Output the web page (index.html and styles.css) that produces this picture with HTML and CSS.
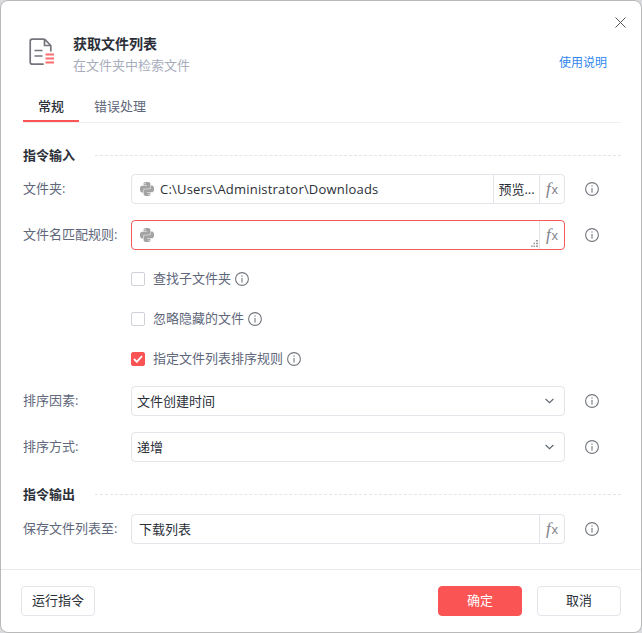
FILE: index.html
```html
<!DOCTYPE html>
<html lang="zh-CN">
<head>
  <meta charset="UTF-8" />
  <title>获取文件列表</title>
  <link rel="stylesheet" href="styles.css">
</head>
<body>
  <svg class="defs" width="0" height="0">
    <symbol id="py" viewBox="0 0 24 24">
      <path fill="#a3a3a3" d="M14.25.18l.9.2.73.26.59.3.45.32.34.34.25.34.16.33.1.3.04.26.02.2-.01.13V8.5l-.05.63-.13.55-.21.46-.26.38-.3.31-.33.25-.35.19-.35.14-.33.1-.3.07-.26.04-.21.02H8.77l-.69.05-.59.14-.5.22-.41.27-.33.32-.27.35-.2.36-.15.37-.1.35-.07.32-.04.27-.02.21v3.06H3.17l-.21-.03-.28-.07-.32-.12-.35-.18-.36-.26-.36-.36-.35-.46-.32-.59-.28-.73-.21-.88-.14-1.05-.05-1.23.06-1.22.16-1.04.24-.87.32-.71.36-.57.4-.44.42-.33.42-.24.4-.16.36-.1.32-.05.24-.01h.16l.06.01h8.16v-.83H6.18l-.01-2.75-.02-.37.05-.34.11-.31.17-.28.25-.26.31-.23.38-.2.44-.18.51-.15.58-.12.64-.1.71-.06.77-.04.84-.02 1.27.05zm-6.3 1.98l-.23.33-.08.41.08.41.23.34.33.22.41.09.41-.09.33-.22.23-.34.08-.41-.08-.41-.23-.33-.33-.22-.41-.09-.41.09zm13.09 3.95l.28.06.32.12.35.18.36.27.36.35.35.47.32.59.28.73.21.88.14 1.04.05 1.23-.06 1.23-.16 1.04-.24.86-.32.71-.36.57-.4.45-.42.33-.42.24-.4.16-.36.09-.32.05-.24.02-.16-.01h-8.22v.82h5.84l.01 2.76.02.36-.05.34-.11.31-.17.29-.25.25-.31.24-.38.2-.44.17-.51.15-.58.13-.64.09-.71.07-.77.04-.84.01-1.27-.04-1.07-.14-.9-.2-.73-.25-.59-.3-.45-.33-.34-.34-.25-.34-.16-.33-.1-.3-.04-.25-.02-.2.01-.13v-5.34l.05-.64.13-.54.21-.46.26-.38.3-.32.33-.24.35-.2.35-.14.33-.1.3-.06.26-.04.21-.02.13-.01h5.84l.69-.05.59-.14.5-.21.41-.28.33-.32.27-.35.2-.36.15-.36.1-.35.07-.32.04-.28.02-.21V6.07h2.09l.14.01zm-6.47 14.25l-.23.33-.08.41.08.41.23.33.33.23.41.08.41-.08.33-.23.23-.33.08-.41-.08-.41-.23-.33-.33-.23-.41-.08-.41.08z"/>
    </symbol>
    <symbol id="info" viewBox="0 0 14 14">
      <circle cx="7" cy="7" r="6.400" fill="none" stroke="#74777f" stroke-width="1.100"/>
      <rect x="6.450" y="6" width="1.100" height="4.600" fill="#74777f"/>
      <rect x="6.450" y="3.400" width="1.100" height="1.300" fill="#74777f"/>
    </symbol>
    <symbol id="chev" viewBox="0 0 9 6">
      <path d="M.6 1l3.900 3.700L8.400 1" fill="none" stroke="#5f6470" stroke-width="1.100"/>
    </symbol>
  </svg>

  <div class="dialog">
    <button class="close" aria-label="关闭">
      <svg width="11" height="11" viewBox="0 0 11 11"><path d="M.5.5l10 10M10.5.5l-10 10" stroke="#555" stroke-width="1"/></svg>
    </button>

    <div class="head">
      <svg class="head-icon" width="26" height="27" viewBox="0 0 26 27">
        <path d="M15.500 1.200H3.200A2 2 0 0 0 1.200 3.200v21a2 2 0 0 0 2 2h11.500M15.500 1.200l6.300 6.300v6M15.500 1.200v6.300h6.300" fill="none" stroke="#74747c" stroke-width="1.700"/>
        <path d="M5.500 12.500h8M5.500 18h8" stroke="#74747c" stroke-width="1.700"/>
        <path d="M16.500 16.500h8.500M16.500 20.500h8.500M16.500 24.500h8.500" stroke="#fb6d6d" stroke-width="1.800"/>
      </svg>
      <div class="head-text">
        <div class="title">获取文件列表</div>
        <div class="subtitle">在文件夹中检索文件</div>
      </div>
      <a class="help">使用说明</a>
    </div>

    <div class="tabs">
      <div class="tab active">常规</div>
      <div class="tab">错误处理</div>
    </div>

    <div class="section-title"><span>指令输入</span></div>

    <div class="row row-first">
      <label class="label">文件夹:</label>
      <div class="field">
        <svg class="py" width="14" height="14"><use href="#py"/></svg>
        <span class="value path">C:\Users\Administrator\Downloads</span>
        <span class="addon preview">预览...</span>
        <span class="addon fx"><i>f</i>x</span>
      </div>
      <svg class="info" width="14" height="14"><use href="#info"/></svg>
    </div>

    <div class="row">
      <label class="label">文件名匹配规则:</label>
      <div class="field error">
        <svg class="py" width="14" height="14"><use href="#py"/></svg>
        <span class="value"></span>
        <svg class="grip" width="7" height="7" viewBox="0 0 7 7"><path d="M5 0h2v1.500H5zM2.500 2.700h1.500v1.500H2.500zM5 2.700h2v1.500H5zM0 5.400h1.500V7H0zM2.500 5.400h1.500V7H2.500zM5 5.400h2V7H5z" fill="#9a9a9a"/></svg>
        <span class="addon fx"><i>f</i>x</span>
      </div>
      <svg class="info" width="14" height="14"><use href="#info"/></svg>
    </div>

    <div class="check-row first-check">
      <span class="box"></span>
      <span class="check-text">查找子文件夹</span>
      <svg width="14" height="14"><use href="#info"/></svg>
    </div>
    <div class="check-row">
      <span class="box"></span>
      <span class="check-text">忽略隐藏的文件</span>
      <svg width="14" height="14"><use href="#info"/></svg>
    </div>
    <div class="check-row">
      <span class="box checked">
        <svg width="10" height="8" viewBox="0 0 10 8"><path d="M1 4l2.800 2.800L9 1.200" fill="none" stroke="#fff" stroke-width="1.800"/></svg>
      </span>
      <span class="check-text">指定文件列表排序规则</span>
      <svg width="14" height="14"><use href="#info"/></svg>
    </div>

    <div class="row sort-first">
      <label class="label">排序因素:</label>
      <div class="field select">
        <span class="value">文件创建时间</span>
        <svg width="9" height="6"><use href="#chev"/></svg>
      </div>
      <svg class="info" width="14" height="14"><use href="#info"/></svg>
    </div>

    <div class="row">
      <label class="label">排序方式:</label>
      <div class="field select">
        <span class="value">递增</span>
        <svg width="9" height="6"><use href="#chev"/></svg>
      </div>
      <svg class="info" width="14" height="14"><use href="#info"/></svg>
    </div>

    <div class="section-title"><span>指令输出</span></div>

    <div class="row row-out">
      <label class="label">保存文件列表至:</label>
      <div class="field">
        <span class="value save">下载列表</span>
        <span class="addon fx"><i>f</i>x</span>
      </div>
      <svg class="info" width="14" height="14"><use href="#info"/></svg>
    </div>

    <div class="foot">
      <button class="btn">运行指令</button>
      <div class="foot-right">
        <button class="btn btn-red">确定</button>
        <button class="btn">取消</button>
      </div>
    </div>
  </div>
</body>
</html>
```

FILE: styles.css
```css
* {
  box-sizing: border-box;
}

html, body {
  margin: 0;
  height: 100%;
}

body {
  background: #d9dadd;
  font-family: "Open Sans", "Noto Sans CJK SC", sans-serif;
  font-size: 13px;
  color: #2b2f38;
  overflow: hidden;
}

.defs {
  display: block;
  height: 0;
}

.dialog {
  position: relative;
  width: 642px;
  height: 633px;
  background: #fff;
  border: 1px solid #b9b9b9;
  border-radius: 8px;
  padding: 0 20px 0 22px;
}

.close {
  position: absolute;
  top: 16px;
  right: 15px;
  padding: 0;
  border: 0;
  background: none;
  line-height: 0;
}

/* header */
.head {
  display: flex;
  padding: 33px 0 0 6px;
  height: 82px;
}

.head-icon {
  margin-top: 4px;
}

.head-text {
  margin-left: 18px;
  flex: 1;
}

.title {
  font-size: 14px;
  font-weight: 700;
  line-height: 20px;
  color: #2b2f38;
}

.subtitle {
  margin-top: 1px;
  line-height: 20px;
  color: #a8adbd;
}

.help {
  align-self: flex-start;
  margin: 19px 14px 0 0;
  font-size: 12px;
  line-height: 20px;
  color: #2f86ee;
}

/* tabs */
.tabs {
  display: flex;
  height: 40px;
  border-bottom: 1px solid #eeeff2;
}

.tab {
  width: 56px;
  height: 39px;
  margin-right: 13px;
  padding-top: 13px;
  text-align: center;
  line-height: 20px;
  color: #60677a;
  white-space: nowrap;
}

.tab.active {
  color: #2b2f38;
  font-weight: 500;
  border-bottom: 2px solid #fb5454;
}

/* section headings */
.section-title {
  display: flex;
  align-items: center;
  height: 20px;
  margin-top: 22px;
  font-weight: 700;
  color: #2b2f38;
}

.section-title span {
  margin-right: 20px;
  padding-bottom: 2px;
}

.section-title::after {
  content: "";
  flex: 1;
  border-top: 1px dashed #e4e5ea;
}

/* form rows */
.row {
  display: flex;
  align-items: center;
  height: 30px;
  margin-top: 16px;
}

.row.row-first {
  margin-top: 9px;
}

.row.row-out {
  margin-top: 10px;
}

.row.sort-first {
  margin-top: 12px;
}

.label {
  width: 108px;
  padding-bottom: 3px;
  color: #60677a;
  white-space: nowrap;
}

.field {
  display: flex;
  align-items: center;
  width: 434px;
  height: 30px;
  border: 1px solid #e4e5ea;
  border-radius: 4px;
  background: #fff;
  overflow: hidden;
}

.field.error {
  border-color: #f45a5a;
}

.py {
  margin-left: 8px;
  flex: none;
}

.value {
  flex: 1;
  margin-left: 6px;
  padding-bottom: 2px;
  color: #2b2f38;
  white-space: nowrap;
}

.value.path {
  padding-bottom: 0;
  letter-spacing: 0.2px;
}

.value.save {
  margin-left: 7px;
}

.select .value {
  margin-left: 5px;
}

.select svg {
  margin-right: 10px;
}

.addon {
  height: 100%;
  display: flex;
  align-items: center;
  justify-content: center;
  border-left: 1px solid #e4e5ea;
  flex: none;
}

.preview {
  width: 46px;
  padding-bottom: 2px;
  color: #2b2f38;
}

.fx {
  width: 25px;
  font-family: "Liberation Sans", sans-serif;
  font-size: 13px;
  color: #7f828b;
}

.fx i {
  font-family: "Liberation Serif", serif;
  font-size: 17px;
  margin-right: 1px;
}

.grip {
  margin-right: 1px;
  align-self: flex-end;
  margin-bottom: 2px;
}

.info {
  margin-left: 20px;
}

/* checkboxes */
.check-row {
  display: flex;
  align-items: center;
  height: 30px;
  margin-top: 10px;
  padding-left: 108px;
}

.check-row.first-check {
  margin-top: 14px;
}

.box {
  display: flex;
  align-items: center;
  justify-content: center;
  width: 14px;
  height: 14px;
  border: 1px solid #d0d2da;
  border-radius: 2px;
  background: #fff;
}

.box.checked {
  background: #fb5454;
  border-color: #fb5454;
}

.check-text {
  margin: 0 4px 0 8px;
  padding-bottom: 3px;
  color: #60677a;
}

/* footer */
.foot {
  display: flex;
  justify-content: space-between;
  margin: 25px -20px 0 -22px;
  padding: 16px 20px 0 20px;
  border-top: 1px solid #e8e9ed;
}

.foot-right {
  display: flex;
  gap: 15px;
}

.btn {
  width: 74px;
  height: 30px;
  padding: 0 0 3px;
  border: 1px solid #e4e5ea;
  border-radius: 4px;
  background: #fff;
  font: inherit;
  color: #2b2f38;
}

.foot-right .btn {
  width: 84px;
}

.btn-red {
  background: #fb5454;
  border-color: #fb5454;
  color: #fff;
}
```
